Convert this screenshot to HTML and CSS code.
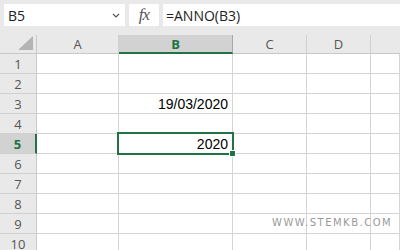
FILE: index.html
```html
<!DOCTYPE html>
<html lang="it">
<head>
    <meta charset="UTF-8">
    <meta name="viewport" content="width=device-width, initial-scale=1.0">
    <title>ANNO</title>
    <link rel="stylesheet" href="styles.css">
</head>
<body>

    <div class="toolbar">
        <div class="name-box">
            <span>B5</span>
            <svg class="chevron" width="8" height="5" viewBox="0 0 8 5"><path d="M1 1 L4 4 L7 1" fill="none" stroke="#555" stroke-width="1.2"/></svg>
        </div>
        <div class="fx-box"><span class="fx">fx</span></div>
        <div class="formula">=ANNO(B3)</div>
    </div>

    <div class="sheet">
        <div class="corner"><div class="triangle"></div></div>
        <div class="col-head">A</div>
        <div class="col-head active">B</div>
        <div class="col-head">C</div>
        <div class="col-head">D</div>
        <div class="col-head last"></div>

        <div class="row-head">1</div><div class="cell"></div><div class="cell"></div><div class="cell"></div><div class="cell"></div><div class="cell"></div>
        <div class="row-head">2</div><div class="cell"></div><div class="cell"></div><div class="cell"></div><div class="cell"></div><div class="cell"></div>
        <div class="row-head">3</div><div class="cell"></div><div class="cell num">19/03/2020</div><div class="cell"></div><div class="cell"></div><div class="cell"></div>
        <div class="row-head">4</div><div class="cell"></div><div class="cell"></div><div class="cell"></div><div class="cell"></div><div class="cell"></div>
        <div class="row-head active">5</div><div class="cell"></div>
        <div class="cell num selected">2020<div class="sel-frame"><div class="handle"></div></div></div>
        <div class="cell"></div><div class="cell"></div><div class="cell"></div>
        <div class="row-head">6</div><div class="cell"></div><div class="cell"></div><div class="cell"></div><div class="cell"></div><div class="cell"></div>
        <div class="row-head">7</div><div class="cell"></div><div class="cell"></div><div class="cell"></div><div class="cell"></div><div class="cell"></div>
        <div class="row-head">8</div><div class="cell"></div><div class="cell"></div><div class="cell"></div><div class="cell"></div><div class="cell"></div>
        <div class="row-head">9</div><div class="cell"></div><div class="cell"></div><div class="cell"></div><div class="cell"></div><div class="cell"></div>
        <div class="row-head">10</div><div class="cell"></div><div class="cell"></div><div class="cell"></div><div class="cell"></div><div class="cell"></div>

        <div class="watermark">WWW.STEMKB.COM</div>
    </div>

</body>
</html>
```

FILE: styles.css
```css
body {
    margin: 0;
    width: 400px;
    height: 250px;
    overflow: hidden;
    background-color: #fff;
    font-family: "Open Sans", sans-serif;
}

/* Formula bar */
.toolbar {
    display: flex;
    gap: 4px;
    height: 35px;
    padding: 4px 0 0 4px;
    box-sizing: border-box;
    background-color: #e9e9e9;
}
.name-box, .fx-box, .formula {
    height: 22px;
    background-color: #fff;
    display: flex;
    align-items: center;
    font-size: 14px;
    color: #222;
}
.name-box {
    width: 121px;
    padding: 0 5px 0 4px;
    box-sizing: border-box;
    justify-content: space-between;
}
.fx-box {
    width: 30px;
    justify-content: center;
}
.fx {
    font-family: "Liberation Serif", serif;
    font-style: italic;
    font-size: 17px;
    letter-spacing: -1px;
    color: #555;
}
.formula {
    flex: 1;
    padding-left: 3px;
}

/* Grid */
.sheet {
    position: relative;
    display: grid;
    grid-template-columns: 37px 82px 114px 74px 64px 29px;
    grid-template-rows: 19px repeat(10, 20px);
}
.corner, .col-head, .row-head {
    background-color: #e9e9e9;
    color: #555;
    font-size: 13px;
}
.corner {
    position: relative;
    border-right: 1px solid #c8c8c8;
    border-bottom: 1px solid #c8c8c8;
}
.triangle {
    position: absolute;
    right: 3px;
    bottom: 3px;
    width: 0;
    height: 0;
    border-left: 15px solid transparent;
    border-bottom: 14px solid #b4b4b4;
}
.col-head {
    display: flex;
    align-items: center;
    justify-content: center;
    border-right: 1px solid #d0d0d0;
    border-bottom: 1px solid #c8c8c8;
    background-clip: padding-box;
}
.col-head.active {
    background-color: #d2d2d2;
    color: #217346;
    font-weight: bold;
    border-bottom: 2px solid #217346;
    border-right-color: #a8a8a8;
}
.col-head.last {
    border-right: none;
}
.row-head {
    display: flex;
    align-items: center;
    justify-content: center;
    border-right: 1px solid #c8c8c8;
    border-bottom: 1px solid #d0d0d0;
}
.row-head.active {
    background-color: #d2d2d2;
    color: #217346;
    font-weight: bold;
    border-right: 2px solid #217346;
}
.cell {
    border-right: 1px solid #d4d4d4;
    border-bottom: 1px solid #d4d4d4;
    font-family: "Liberation Sans", sans-serif;
    font-size: 14px;
    color: #000;
}
.num {
    display: flex;
    align-items: center;
    justify-content: flex-end;
    padding-right: 4px;
}
.selected {
    position: relative;
}
.sel-frame {
    position: absolute;
    left: -2px;
    top: -2px;
    right: -2px;
    bottom: -2px;
    border: 2px solid #217346;
}
.handle {
    position: absolute;
    right: -4px;
    bottom: -4px;
    width: 5px;
    height: 5px;
    background-color: #217346;
    border: 1px solid #fff;
}
.watermark {
    position: absolute;
    left: 272px;
    top: 182px;
    font-family: "DejaVu Sans", sans-serif;
    font-size: 10px;
    letter-spacing: 1.5px;
    color: #999;
}
```
